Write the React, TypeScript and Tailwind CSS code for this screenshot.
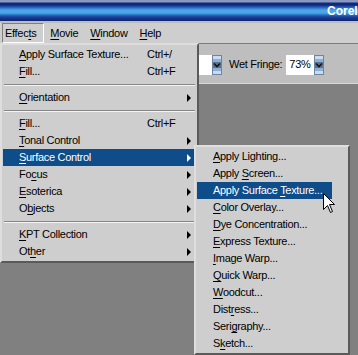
import React from 'react';

type Entry =
  | { kind: 'sep' }
  | { kind: 'item'; label: string; u: number; shortcut?: string; sub?: boolean; active?: boolean };

const effects: Entry[] = [
  { kind: 'item', label: 'Apply Surface Texture...', u: 0, shortcut: 'Ctrl+/' },
  { kind: 'item', label: 'Fill...', u: 0, shortcut: 'Ctrl+F' },
  { kind: 'sep' },
  { kind: 'item', label: 'Orientation', u: 0, sub: true },
  { kind: 'sep' },
  { kind: 'item', label: 'Fill...', u: 0, shortcut: 'Ctrl+F' },
  { kind: 'item', label: 'Tonal Control', u: 0, sub: true },
  { kind: 'item', label: 'Surface Control', u: 0, sub: true, active: true },
  { kind: 'item', label: 'Focus', u: 2, sub: true },
  { kind: 'item', label: 'Esoterica', u: 0, sub: true },
  { kind: 'item', label: 'Objects', u: 1, sub: true },
  { kind: 'sep' },
  { kind: 'item', label: 'KPT Collection', u: 0, sub: true },
  { kind: 'item', label: 'Other', u: 2, sub: true },
];

const surface: Entry[] = [
  { kind: 'item', label: 'Apply Lighting...', u: 0 },
  { kind: 'item', label: 'Apply Screen...', u: 6 },
  { kind: 'item', label: 'Apply Surface Texture...', u: 14, active: true },
  { kind: 'item', label: 'Color Overlay...', u: 0 },
  { kind: 'item', label: 'Dye Concentration...', u: 0 },
  { kind: 'item', label: 'Express Texture...', u: 0 },
  { kind: 'item', label: 'Image Warp...', u: 0 },
  { kind: 'item', label: 'Quick Warp...', u: 0 },
  { kind: 'item', label: 'Woodcut...', u: 0 },
  { kind: 'item', label: 'Distress...', u: 4 },
  { kind: 'item', label: 'Serigraphy...', u: 4 },
  { kind: 'item', label: 'Sketch...', u: 1 },
];

function Mnemonic({ text, u }: { text: string; u: number }) {
  return (
    <span className="whitespace-nowrap">
      {text.slice(0, u)}
      <span className="underline decoration-1 underline-offset-[2px]">{text[u]}</span>
      {text.slice(u + 1)}
    </span>
  );
}

function Menu({ entries, withShortcuts }: { entries: Entry[]; withShortcuts?: boolean }) {
  return (
    <div className="flex flex-col">
      {entries.map((e, i) =>
        e.kind === 'sep' ? (
          <div key={i} className="flex h-[9px] items-center px-[1px]">
            <div className="h-[2px] w-full border-t border-t-[#868686] border-b border-b-[#f4f4f4]" />
          </div>
        ) : (
          <div
            key={i}
            className={`flex h-[17px] items-center pl-[16px] ${
              e.active ? 'bg-[#0f4c8a] text-white' : 'text-black'
            }`}
          >
            <div className={withShortcuts ? 'w-[128px]' : ''}>
              <Mnemonic text={e.label} u={e.u} />
            </div>
            {e.shortcut && <span>{e.shortcut}</span>}
            {e.sub && (
              <span
                className={`ml-auto mr-[5px] h-0 w-0 border-y-[4px] border-l-[4px] border-y-transparent ${
                  e.active ? 'border-l-white' : 'border-l-black'
                }`}
              />
            )}
          </div>
        )
      )}
    </div>
  );
}

function Spinner() {
  return (
    <svg width="10" height="20" viewBox="0 0 10 20">
      <rect x="0" y="0" width="10" height="20" fill="#6f84a2" />
      <rect x="1" y="1" width="8" height="3" fill="#c9dcef" />
      <rect x="1" y="4" width="8" height="3" fill="#8eb0d6" />
      <rect x="1" y="7" width="8" height="6" fill="#5c7390" />
      <path d="M2 8.5 L5 11.5 L8 8.5" stroke="#141414" strokeWidth="1.6" fill="none" />
      <rect x="1" y="13" width="8" height="3" fill="#8eb0d6" />
      <rect x="1" y="16" width="8" height="3" fill="#c9dcef" />
    </svg>
  );
}

export default function App() {
  return (
    <div className="relative h-[355px] w-[358px] overflow-hidden bg-[#808080] font-['Liberation_Sans',Arial,sans-serif] text-[11px] tracking-[-0.3px]">
      {/* Title bar */}
      <div className="flex h-[21px] items-center overflow-hidden whitespace-nowrap bg-[linear-gradient(to_bottom,#8a98c2_0px,#8a98c2_2px,#10297a_3px,#10297a_5px,#2458b8_7px,#4ba6e6_10px,#4ba6e6_13px,#2a6cc4_15px,#1a3f98_17px,#0d2470_21px)] pl-[327px]">
        <span className="text-[12px] font-bold tracking-normal text-white">Corel</span>
      </div>

      {/* Menu bar */}
      <div className="h-[2px] bg-[#bdbdbd]" />
      <div className="flex h-[20px] items-stretch bg-[#cecece] pl-[2px]">
        <div className="flex items-center border border-t-[#808080] border-l-[#808080] border-r-white border-b-white pl-[2px] pr-[7px]">
          <Mnemonic text="Effects" u={5} />
        </div>
        <div className="flex items-center px-[6px]">
          <Mnemonic text="Movie" u={0} />
        </div>
        <div className="flex items-center px-[6px]">
          <Mnemonic text="Window" u={0} />
        </div>
        <div className="flex items-center px-[6px]">
          <Mnemonic text="Help" u={0} />
        </div>
      </div>

      {/* Property bar */}
      <div className="flex h-[41px] items-center border-t border-t-[#7c7c7c] border-b border-b-[#d8d8d8] bg-[#bebebe] pl-[150px] pt-[2px]">
        <div className="h-[20px] w-[62px] bg-white" />
        <Spinner />
        <span className="ml-[7px] text-black">Wet Fringe:</span>
        <div className="ml-[4px] flex h-[20px] w-[28px] items-center bg-white pl-[3px] text-black">73%</div>
        <Spinner />
      </div>

      {/* Effects menu */}
      <div className="absolute left-0 top-[43px] w-[199px] border-2 border-t-[#dedede] border-l-[#dedede] border-r-[#5a5a5a] border-b-[#5a5a5a] bg-[#cecece] p-[1px]">
        <Menu entries={effects} withShortcuts />
      </div>

      {/* Surface Control submenu */}
      <div className="absolute left-[194px] top-[145px] w-[156px] border-2 border-t-[#dedede] border-l-[#dedede] border-r-[#5a5a5a] border-b-[#5a5a5a] bg-[#cecece] py-[1px] pl-[1px] pr-[16px]">
        <Menu entries={surface} />
      </div>

      {/* Mouse pointer */}
      <svg className="absolute left-[323px] top-[193px]" width="13" height="21" viewBox="0 0 13 21">
        <path
          d="M0.5 0.5 L0.5 16.5 L4.5 12.5 L7.5 19.5 L9.5 18.5 L6.5 11.5 L11.5 11.5 Z"
          fill="#ffffff"
          stroke="#000000"
          strokeWidth="1"
        />
      </svg>
    </div>
  );
}
